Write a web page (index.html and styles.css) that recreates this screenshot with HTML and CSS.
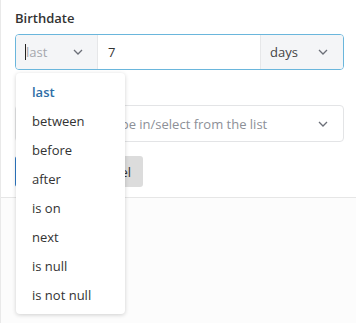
FILE: index.html
```html
<!DOCTYPE html>
<html lang="en">
<head>
    <meta charset="UTF-8">
    <title>Filter</title>
    <link rel="stylesheet" href="styles.css">
</head>
<body>
    <div class="panel">
        <div class="form">
            <div class="field">
                <div class="label">Birthdate</div>
                <div class="group focused">
                    <div class="select op">
                        <span class="caret"></span><span class="placeholder">last</span>
                        <svg class="chev" width="10" height="6" viewBox="0 0 10 6"><path d="M1 1l4 4 4-4" fill="none" stroke="#6b6f78" stroke-width="1.3"/></svg>
                    </div>
                    <div class="value">7</div>
                    <div class="select unit">
                        <span>days</span>
                        <svg class="chev" width="10" height="6" viewBox="0 0 10 6"><path d="M1 1l4 4 4-4" fill="none" stroke="#6b6f78" stroke-width="1.3"/></svg>
                    </div>
                </div>
            </div>
            <div class="field">
                <div class="label">&nbsp;</div>
                <div class="group">
                    <div class="combo">
                        <span class="placeholder">Type in/select from the list</span>
                        <svg class="chev" width="10" height="6" viewBox="0 0 10 6"><path d="M1 1l4 4 4-4" fill="none" stroke="#6b6f78" stroke-width="1.3"/></svg>
                    </div>
                </div>
            </div>
            <div class="buttons">
                <button type="button" class="btn primary">Apply</button>
                <button type="button" class="btn">Cancel</button>
            </div>
        </div>
        <div class="footer"></div>

        <ul class="menu">
            <li class="active">last</li>
            <li>between</li>
            <li>before</li>
            <li>after</li>
            <li>is on</li>
            <li>next</li>
            <li>is null</li>
            <li>is not null</li>
        </ul>
    </div>
</body>
</html>
```

FILE: styles.css
```css
body {
    margin: 0;
    background-color: white;
}
body * {
    font-family: "Open Sans", "Noto Sans", sans-serif;
    box-sizing: border-box;
}
div.panel {
    position: relative;
    height: 323px;
    border-left: 1px solid #e9e9e9;
    display: flex;
    flex-direction: column;
}
div.form {
    padding: 9px 12px 0 14px;
}
div.field div.label {
    font-size: 13px;
    font-weight: 600;
    line-height: 18px;
    color: #333;
    margin-bottom: 7px;
}
div.field + div.field {
    margin-top: 10px;
}
div.group {
    display: flex;
    height: 37px;
    border: 1px solid #e3e4e6;
    border-radius: 4px;
    overflow: hidden;
}
div.group.focused {
    height: 36px;
    border-color: #6ab6dc;
}
div.select {
    display: flex;
    align-items: center;
    background-color: #f4f5f7;
    font-size: 13px;
    color: #444;
    padding-left: 9px;
}
div.select.op {
    width: 82px;
    border-right: 1px solid #e6e7e9;
}
div.select.unit {
    width: 83px;
    margin-left: auto;
    border-left: 1px solid #e6e7e9;
}
div.select svg.chev {
    margin-left: auto;
    margin-right: 14px;
}
div.select.unit svg.chev {
    margin-right: 15px;
}
span.caret {
    display: inline-block;
    width: 1px;
    height: 16px;
    background-color: #222;
}
span.placeholder {
    color: #a4a7ad;
}
div.value {
    display: flex;
    align-items: center;
    padding-left: 10px;
    font-size: 13px;
    color: #333;
}
div.combo {
    display: flex;
    align-items: center;
    width: 100%;
    padding-left: 91px;
    font-size: 13px;
}
div.combo span.placeholder {
    color: #8d9097;
}
div.combo svg.chev {
    margin-left: auto;
    margin-right: 15px;
}
div.buttons {
    display: flex;
    gap: 6px;
    margin-top: 14px;
}
button.btn {
    height: 31px;
    padding: 0 12px;
    border: none;
    border-radius: 3px;
    background-color: #dcdcdc;
    color: #333;
    font-size: 13px;
}
button.btn.primary {
    background-color: #2d78c4;
    color: white;
}
div.footer {
    margin-top: 10px;
    flex: 1;
    border-top: 1px solid #e6e6e6;
    background-color: #fcfcfc;
}
ul.menu {
    position: absolute;
    left: 15px;
    top: 73px;
    width: 109px;
    margin: 0;
    padding: 5px 0 4px 0;
    list-style: none;
    background-color: white;
    border-radius: 4px;
    box-shadow: 0 1px 4px rgba(0, 0, 0, 0.18);
}
ul.menu li {
    height: 29px;
    line-height: 29px;
    padding-left: 16px;
    font-size: 13px;
    color: #333;
}
ul.menu li.active {
    color: #2e6ea6;
    font-weight: 600;
}
```
